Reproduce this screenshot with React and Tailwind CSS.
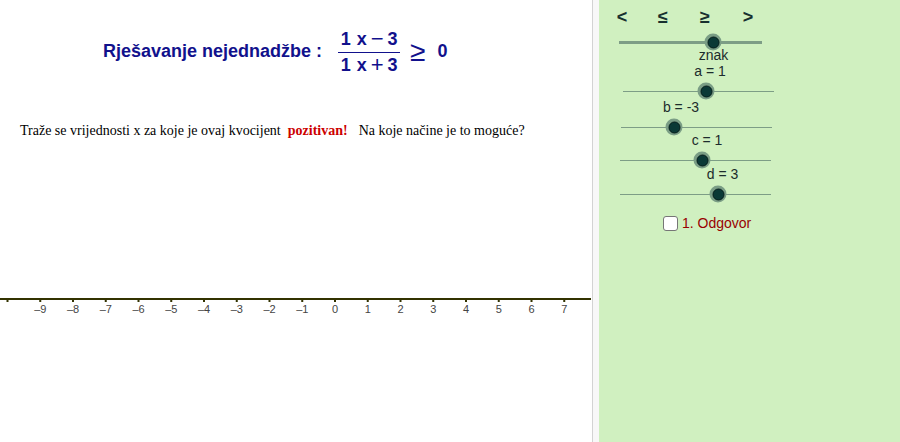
import React from "react";

const SANS = { fontFamily: '"Liberation Sans", Arial, sans-serif' };
const SERIF = { fontFamily: '"Liberation Serif", "Times New Roman", serif' };

const TICK_ZERO = 335;
const TICK_STEP = 32.75;
const ticks = Array.from({ length: 18 }, (_, i) => i - 10);

function Knob({ left }) {
  return (
    <span
      className="absolute top-1/2 flex h-[17px] w-[17px] -translate-x-1/2 -translate-y-1/2 items-center justify-center rounded-full bg-[#7a9d85]"
      style={{ left }}
    >
      <span className="h-[12px] w-[12px] rounded-full border border-[#041c1a] bg-[#0b3936]" />
    </span>
  );
}

function Slider({ start, width, knob, thick = false, mt }) {
  return (
    <div className={`flex h-[4px] items-center ${mt}`}>
      <div
        className={`relative ${thick ? "h-[3px]" : "h-px"} bg-[#7d9d86]`}
        style={{ marginLeft: start, width }}
      >
        <Knob left={knob} />
      </div>
    </div>
  );
}

function Label({ children, center, mt }) {
  return (
    <div
      className={`h-[14px] text-center text-[14px] leading-[14px] text-[#1c2c2c] ${mt}`}
      style={{ width: center * 2 }}
    >
      {children}
    </div>
  );
}

function NumberLine() {
  return (
    <svg className="mt-[151px] block" width="592" height="28" viewBox="0 0 592 28">
      <rect x="0" y="8" width="591" height="2" fill="#333300" />
      {ticks.map((n) => {
        const x = TICK_ZERO + n * TICK_STEP;
        return (
          <g key={n}>
            <rect x={x - 1} y="8" width="2" height="4" fill="#333300" />
            {n > -10 ? (
              <text
                x={x}
                y="23"
                textAnchor="middle"
                fontSize="11"
                fill="#444444"
                fontFamily='"Liberation Sans", Arial, sans-serif'
              >
                {n < 0 ? `–${-n}` : n}
              </text>
            ) : null}
          </g>
        );
      })}
    </svg>
  );
}

function Fraction() {
  return (
    <div className="ml-[16px] flex flex-col">
      <div className="flex h-[20px] items-center justify-center px-[1px] leading-[20px]">
        <span>1</span>
        <span className="ml-[6px]">x</span>
        <span className="ml-[4px] text-[22px] font-normal leading-[20px]">−</span>
        <span className="ml-[4px]">3</span>
      </div>
      <div className="mt-[3px] h-px w-[62px] bg-[#11118c]" />
      <div className="mt-[2px] flex h-[20px] items-center justify-center px-[1px] leading-[20px]">
        <span>1</span>
        <span className="ml-[6px]">x</span>
        <span className="ml-[4px] text-[22px] font-normal leading-[20px]">+</span>
        <span className="ml-[4px]">3</span>
      </div>
    </div>
  );
}

export default function App() {
  return (
    <div className="flex h-[442px] w-[900px] overflow-hidden bg-white" style={SANS}>
      <div className="flex h-full w-[592px] flex-col">
        <div className="flex h-[74px] items-center pl-[103px] pt-[29px] text-[18px] font-bold text-[#11118c]">
          <span>Rješavanje nejednadžbe :</span>
          <Fraction />
          <span className="ml-[10px] text-[28px] font-normal leading-[20px]">≥</span>
          <span className="ml-[12px]">0</span>
        </div>

        <p className="mt-[49px] pl-[20px] text-[14px] leading-[16px] text-black" style={SERIF}>
          <span>Traže se vrijednosti x za koje je ovaj kvocijent</span>
          <span className="ml-[7px] font-bold text-[#cc0000]">pozitivan!</span>
          <span className="ml-[11px]">Na koje načine je to moguće?</span>
        </p>

        <NumberLine />
      </div>

      <div className="h-full w-px bg-[#d3d3d3]" />
      <div className="h-full w-[6px] bg-[#f8f8f8]" />

      <div className="flex h-full flex-1 flex-col bg-[#d0f0c0] pt-[8px]">
        <div className="flex h-[18px] items-center pl-[2px] text-[18px] font-bold leading-[18px] text-[#17302f]">
          <span className="w-[42px] text-center">&lt;</span>
          <span className="w-[40px] text-center">≤</span>
          <span className="w-[44px] text-center">≥</span>
          <span className="w-[42px] text-center">&gt;</span>
        </div>

        <Slider start={20} width={143} knob={94} thick mt="mt-[14px]" />
        <Label center={114.5} mt="mt-[4px]">znak</Label>
        <Label center={111} mt="mt-[2px]">a = 1</Label>
        <Slider start={24} width={151} knob={83} mt="mt-[11px]" />
        <Label center={82} mt="mt-[7px]">b = -3</Label>
        <Slider start={22} width={151} knob={53} mt="mt-[11px]" />
        <Label center={108} mt="mt-[4px]">c = 1</Label>
        <Slider start={21} width={151} knob={82} mt="mt-[11px]" />
        <Label center={123.5} mt="mt-[5px]">d = 3</Label>
        <Slider start={21} width={151} knob={98} mt="mt-[11px]" />

        <label className="mt-[20px] flex h-[15px] items-center pl-[64px]">
          <input
            type="checkbox"
            className="h-[15px] w-[15px] appearance-none rounded-[3px] border border-[#767676] bg-white"
          />
          <span className="ml-[4px] text-[14px] leading-[15px] text-[#990000]">1. Odgovor</span>
        </label>
      </div>
    </div>
  );
}
